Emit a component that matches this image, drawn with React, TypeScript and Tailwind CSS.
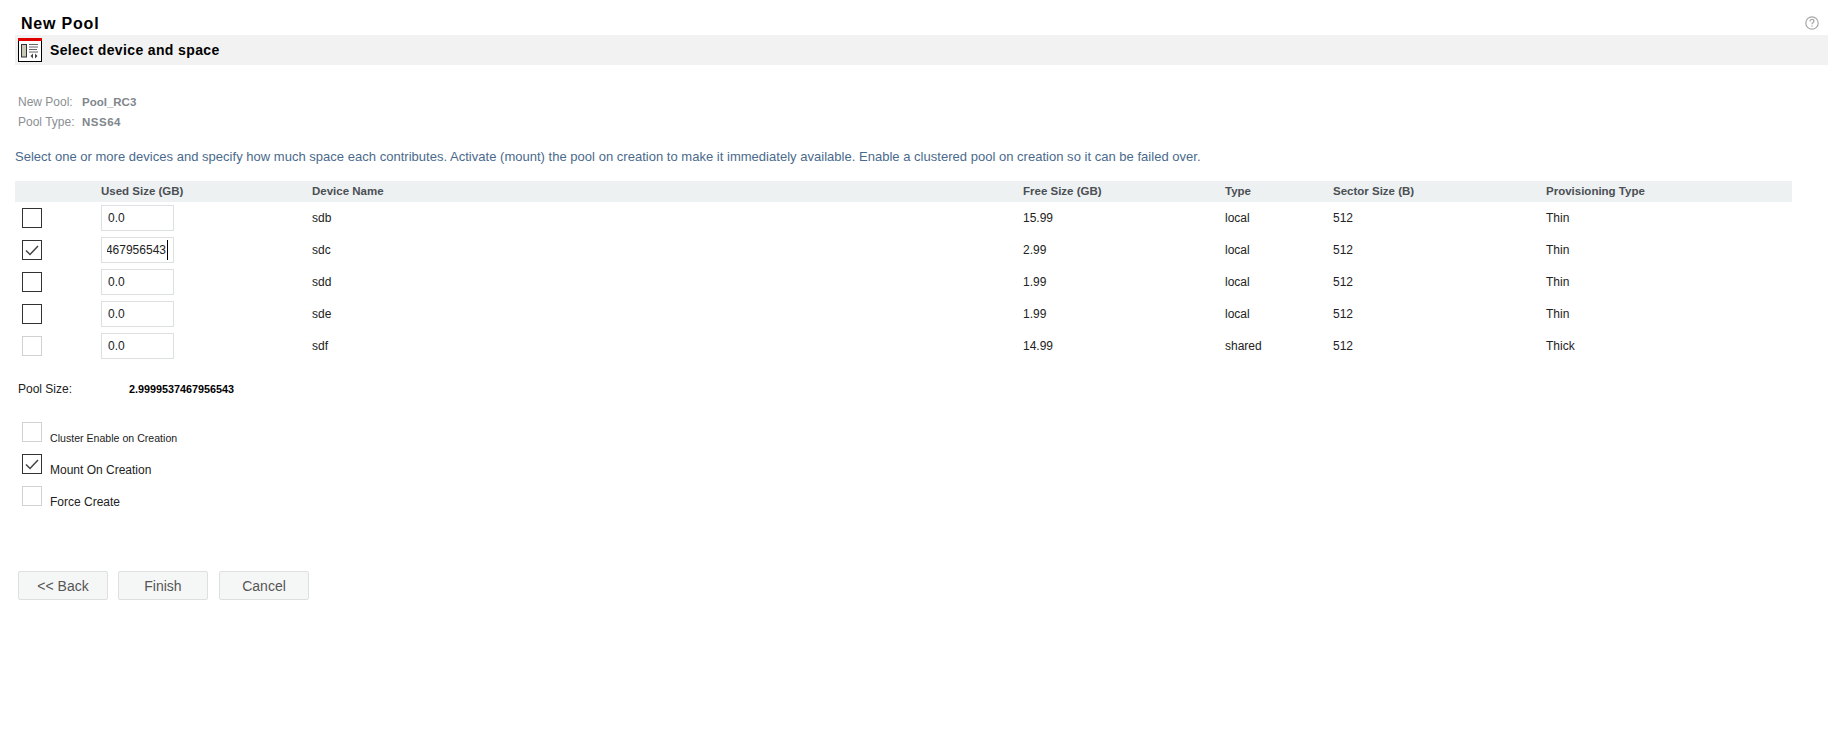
const DEVICES = [
  { used: '0.0', name: 'sdb', free: '15.99', type: 'local', sector: '512', prov: 'Thin', state: 'off' },
  { used: '2.9999537467956543', name: 'sdc', free: '2.99', type: 'local', sector: '512', prov: 'Thin', state: 'on' },
  { used: '0.0', name: 'sdd', free: '1.99', type: 'local', sector: '512', prov: 'Thin', state: 'off' },
  { used: '0.0', name: 'sde', free: '1.99', type: 'local', sector: '512', prov: 'Thin', state: 'off' },
  { used: '0.0', name: 'sdf', free: '14.99', type: 'shared', sector: '512', prov: 'Thick', state: 'disabled' },
]

const COLS = 'grid grid-cols-[86px_211px_711px_202px_108px_213px_1fr] items-center'

function Check({ state }: { state: string }) {
  const border = state === 'disabled' ? 'border-[#d0d2d2]' : 'border-[#333333]'
  return (
    <div className={`w-5 h-5 border ${border} bg-white flex items-center justify-center shrink-0`}>
      {state === 'on' && (
        <svg width="14" height="11" viewBox="0 0 14 11" fill="none">
          <path d="M1 5.5L5 9.5L13 1" stroke="#444444" strokeWidth="1.5" />
        </svg>
      )}
    </div>
  )
}

function SizeField({ value, active }: { value: string; active: boolean }) {
  return (
    <div className="w-[73px] h-[26px] border border-[#dde0e0] bg-white flex items-center text-[12px] text-[#222222] pl-[5px] pr-[5px]">
      {active ? (
        <div className="w-full flex justify-end overflow-hidden">
          <span className="whitespace-nowrap border-r border-black leading-[20px] pr-[1px] shrink-0">{value}</span>
        </div>
      ) : (
        <span className="pl-[1px]">{value}</span>
      )}
    </div>
  )
}

function Btn({ label }: { label: string }) {
  return (
    <button className="w-[90px] h-[29px] pt-[1px] bg-[#f5f7f7] border border-[#dde0e0] rounded-[2px] text-[14px] text-[#555555]">
      {label}
    </button>
  )
}

export default function App() {
  return (
    <div className="w-[1828px] h-[738px] bg-white relative overflow-hidden font-['Liberation_Sans',Arial,sans-serif]">
      <div className="h-[35px] flex items-end pl-[21px] pb-[1px]">
        <h1 className="text-[16px] font-bold text-black tracking-[0.8px] leading-[20px]">New Pool</h1>
      </div>
      <svg className="absolute left-[1805px] top-[16px]" width="14" height="14" viewBox="0 0 14 14" fill="none">
        <circle cx="7" cy="7" r="6.2" stroke="#a8a8a8" strokeWidth="1.2" />
        <path d="M5 5.4C5 4 6 3.4 7 3.4C8.2 3.4 9 4.1 9 5.1C9 6.4 7 6.5 7 8.2" stroke="#a8a8a8" strokeWidth="1.2" />
        <rect x="6.4" y="9.4" width="1.2" height="1.3" fill="#a8a8a8" />
      </svg>

      <div className="ml-[15px] h-[30px] bg-[#f2f2f2] flex items-center">
        <svg className="ml-[3px]" width="24" height="24" viewBox="0 0 24 24" fill="none">
          <rect x="0.5" y="0.5" width="23" height="23" fill="white" stroke="black" />
          <rect x="0" y="0" width="24" height="3" fill="#e00000" />
          <rect x="3.5" y="6.5" width="5" height="12.5" fill="#c8c8b8" stroke="#333333" />
          <path d="M11 6.5H20M11 9H20M11 11.5H19M11 14H20" stroke="#666666" />
          <path d="M15 15.5L12.5 18L15 20.5ZM17 15.5L19.5 18L17 20.5Z" fill="#444444" />
        </svg>
        <span className="ml-[8px] text-[14px] font-bold text-black tracking-[0.37px]">Select device and space</span>
      </div>

      <div className="mt-[30px] ml-[18px] flex flex-col gap-[5px] text-[12px] text-[#8a8f94] leading-[15px]">
        <div className="flex">
          <span className="w-[64px]">New Pool:</span>
          <span className="text-[11.5px] font-bold text-[#80868c]">Pool_RC3</span>
        </div>
        <div className="flex">
          <span className="w-[64px]">Pool Type:</span>
          <span className="text-[11.5px] font-bold text-[#80868c] tracking-[0.5px]">NSS64</span>
        </div>
      </div>

      <p className="mt-[19px] ml-[15px] text-[13px] leading-[16px] text-[#4a6a8c] tracking-[0.02px]">
        Select one or more devices and specify how much space each contributes. Activate (mount) the pool on creation to make it immediately available. Enable a clustered pool on creation so it can be failed over.
      </p>

      <div className="mt-[16px] ml-[15px] w-[1777px]">
        <div className={`${COLS} h-[21px] bg-[#eef1f2] text-[11.5px] font-bold text-[#4a4f54]`}>
          <span />
          <span>Used Size (GB)</span>
          <span>Device Name</span>
          <span>Free Size (GB)</span>
          <span>Type</span>
          <span>Sector Size (B)</span>
          <span>Provisioning Type</span>
        </div>
        {DEVICES.map((d) => (
          <div key={d.name} className={`${COLS} h-[32px] text-[12px] text-[#222222]`}>
            <div className="pl-[7px]">
              <Check state={d.state} />
            </div>
            <SizeField value={d.used} active={d.state === 'on'} />
            <span>{d.name}</span>
            <span>{d.free}</span>
            <span>{d.type}</span>
            <span>{d.sector}</span>
            <span>{d.prov}</span>
          </div>
        ))}
      </div>

      <div className="mt-[18px] ml-[18px] flex items-center text-[12px] text-[#222222] leading-[16px]">
        <span className="w-[111px]">Pool Size:</span>
        <span className="text-[10.8px] font-bold text-black mt-[1px]">2.9999537467956543</span>
      </div>

      <div className="mt-[25px] ml-[22px] flex flex-col gap-[12px] text-[#222222]">
        <div className="flex items-end gap-[8px] h-[20px]">
          <Check state="disabled" />
          <span className="text-[10.6px] leading-[14px] -mb-[3px]">Cluster Enable on Creation</span>
        </div>
        <div className="flex items-end gap-[8px] h-[20px]">
          <Check state="on" />
          <span className="text-[12px] leading-[14px] -mb-[3px]">Mount On Creation</span>
        </div>
        <div className="flex items-end gap-[8px] h-[20px]">
          <Check state="disabled" />
          <span className="text-[12px] leading-[14px] -mb-[3px]">Force Create</span>
        </div>
      </div>

      <div className="mt-[65px] ml-[18px] flex">
        <Btn label="<< Back" />
        <div className="ml-[10px]">
          <Btn label="Finish" />
        </div>
        <div className="ml-[11px]">
          <Btn label="Cancel" />
        </div>
      </div>
    </div>
  )
}
